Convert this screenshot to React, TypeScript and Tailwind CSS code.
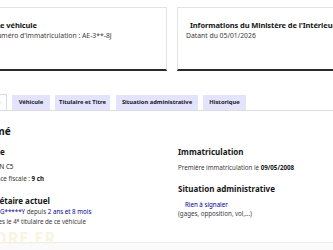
import React from "react";

const font = { fontFamily: '"Noto Sans", "Liberation Sans", sans-serif' };

function Card({ title, sub }: { title: string; sub: string }) {
  return (
    <div className="h-[64px] bg-white border border-[#e3e3e3] border-b-2 border-b-[#2a2a2a]">
      <p className="pl-[12px] pt-[12px] text-[7.5px] leading-[10px] font-bold tracking-[-0.1px] text-[#161616] whitespace-nowrap">{title}</p>
      <p className="pl-[8px] mt-[2px] text-[6.8px] leading-[8px] text-[#3a3a3a] whitespace-nowrap">{sub}</p>
    </div>
  );
}

const tabs = [
  { label: "Véhicule", cls: "ml-[5px] w-[38px]" },
  { label: "Titulaire et Titre", cls: "ml-[5px] w-[55px]" },
  { label: "Situation administrative", cls: "ml-[6px] w-[82px]" },
  { label: "Historique", cls: "ml-[5px] w-[43px]" },
];

export default function App() {
  return (
    <div className="relative w-[333px] h-[250px] overflow-hidden bg-white" style={font}>
      <div className="ml-[-17px] w-[400px]">
        <div className="pt-[7px] grid grid-cols-[184px_190px] gap-[10px]">
          <Card title="Le véhicule" sub="Numéro d'immatriculation : AE-3**-8J" />
          <Card title="Informations du Ministère de l'Intérieur" sub="Datant du 05/01/2026" />
        </div>

        <div className="mt-[23px] flex items-end border-b border-[#dddddd]">
          <div className="ml-[-16px] w-[40px] h-[16px] flex items-center justify-center bg-white border-x border-t border-[#dddddd] text-[5.8px] font-bold text-[#000091] whitespace-nowrap">
            Synthèse
          </div>
          {tabs.map((t) => (
            <div
              key={t.label}
              className={`${t.cls} h-[15px] flex items-center justify-center bg-[#e3e3fd] text-[5.8px] font-bold text-[#161616] whitespace-nowrap`}
            >
              {t.label}
            </div>
          ))}
        </div>

        <div className="pt-[14px] ml-[-8px]">
          <p className="ml-[-4px] text-[10px] leading-[12px] font-bold text-[#161616]">Résumé</p>
          <div className="mt-[9px] grid grid-cols-[194px_190px] gap-[9px]">
            <div className="text-[6.2px] text-[#3a3a3a]">
              <p className="ml-[-4px] text-[8px] leading-[12px] font-bold text-[#161616]">Véhicule</p>
              <div className="pl-[3px]">
                <p className="mt-[4px] leading-[10px] text-[#161616]">CITROEN C5</p>
                <p className="mt-[2px] leading-[10px]">
                  Puissance fiscale : <span className="font-bold text-[#161616]">9 ch</span>
                </p>
              </div>
              <p className="mt-[11px] text-[8px] leading-[12px] font-bold text-[#161616]">Propriétaire actuel</p>
              <div className="pl-[2px]">
                <p className="pl-[23px] leading-[10px]">
                  <span className="text-[#000091]">G*****Y</span> depuis{" "}
                  <span className="text-[#000091]">2 ans et 8 mois</span>
                </p>
                <p className="leading-[10px]">
                  Vous êtes le 4<sup className="text-[4.5px]">e</sup> titulaire de ce véhicule
                </p>
              </div>
            </div>
            <div className="text-[6.2px] text-[#3a3a3a]">
              <p className="text-[8px] leading-[12px] font-bold text-[#161616]">Immatriculation</p>
              <p className="mt-[5px] leading-[10px]">
                Première immatriculation le <span className="font-bold text-[#161616]">09/05/2008</span>
              </p>
              <p className="mt-[10px] text-[8px] leading-[12px] font-bold text-[#161616]">Situation administrative</p>
              <p className="mt-[6px] pl-[7px] leading-[8px] text-[#000091]">Rien à signaler</p>
              <p className="leading-[9px]">(gages, opposition, vol,...)</p>
            </div>
          </div>
        </div>
      </div>
      <div className="absolute left-0 right-0 top-[242px] bottom-0 border-t border-[#ececec] bg-[#fafafa]" />
      <div className="absolute left-[-6px] top-[230px] text-[16px] leading-[16px] font-bold tracking-[1px] text-[#f8f4e0]">
        ORE.FR
      </div>
    </div>
  );
}
